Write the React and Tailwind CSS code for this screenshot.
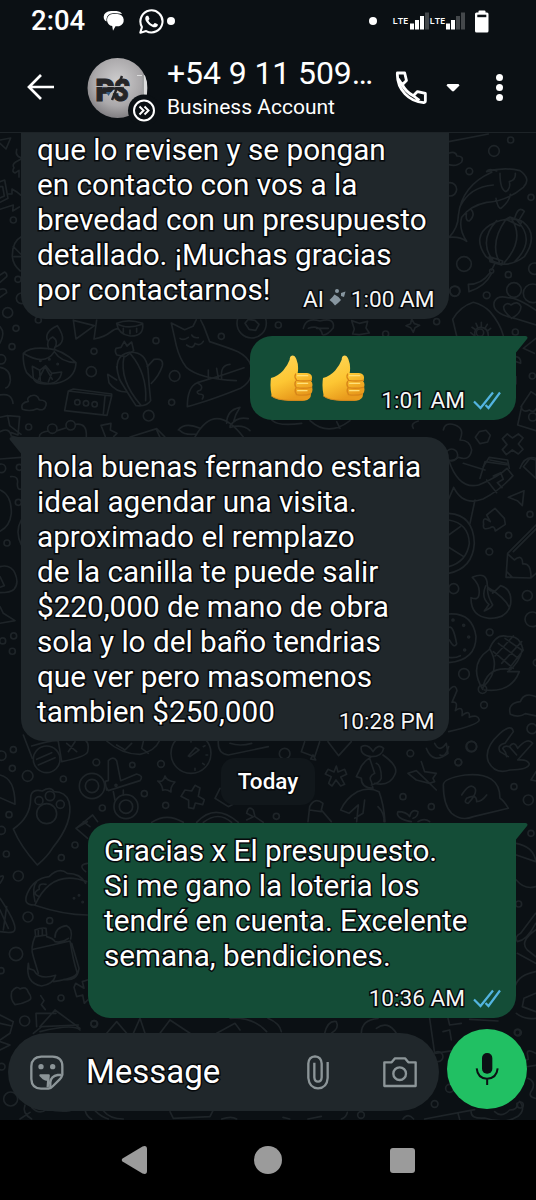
import React from 'react';

const OUTLINE = '[paint-order:stroke_fill] [-webkit-text-stroke:3px_#06090b]';

const Circles = ({ items }) => items.map(([x, y, r], i) => <circle key={i} cx={x} cy={y} r={r} />);

const Lines = ({ items }) => items.map((d, i) => <path key={i} d={d} />);

const Wallpaper = () => (
  <svg className="absolute inset-0" width="536" height="1200" viewBox="0 0 536 1200" fill="none" stroke="#1e2428" strokeLinecap="round" strokeLinejoin="round">
    {/* left edge, upper */}
    <g transform="translate(0 130) scale(.3333)" strokeWidth="5">
      <Circles items={[[40, 270, 9], [54, 448, 9], [65, 505, 16], [23, 548, 15], [48, 595, 9], [36, 650, 9], [3, 688, 14], [58, 1012, 9], [55, 1117, 9], [21, 1239, 9], [41, 1518, 9], [4, 1015, 13], [8, 1533, 9], [37, 1564, 9]]} />
      <Lines
        items={[
          'M0 30 L32 24 L18 57 L0 40', 'M50 58 q-5 20 12 25 M62 88 l-15 8 q-12 8 -5 17 q-8 12 3 16 l12 -8 v20',
          'M0 155 l14 -5 l10 55 l-24 12 M0 170 l8 0 l5 28 l-13 6', 'M24 192 h12 v-15 l16 10 l10 8 M0 238 l40 -13 l-2 18 l20 -12',
          'M64 320 q-28 14 -27 60 q2 25 24 43 M40 350 l22 22 M42 380 h20', 'M0 435 l14 -9 q9 5 6 14 l-20 17 M0 478 q20 -5 20 10 l-20 14', 'M0 590 q17 18 0 49',
          'M0 712 q32 5 31 40 q-3 20 -14 22', 'M0 795 q35 -7 39 25', 'M0 862 l23 -5 l6 30 l34 26 M23 857 l36 3 l-5 55 l-20 -7 M0 905 q28 -14 34 13 l28 8', 'M0 987 l63 -5',
          'M32 1040 q25 -3 20 22 q0 20 12 15', 'M0 1080 q35 15 34 70 q-4 38 -34 54', 'M64 1170 q-20 35 0 75',
          'M0 1310 q32 -8 45 20 q13 30 -3 48 q-10 10 -42 10 M0 1340 l13 27 l-13 5', 'M0 1430 l10 20 l35 22 l-45 8',
        ]}
      />
    </g>
    {/* oil lamp, box, cactus, fox */}
    <g transform="translate(0 300) scale(.3333)" strokeWidth="5">
      <Circles items={[[468, 122, 9], [282, 154, 9], [274, 215, 15], [524, 228, 16], [664, 109, 9], [515, 307, 9], [375, 348, 9], [446, 347, 16], [86, 381, 9], [232, 307, 8], [258, 310, 8], [284, 313, 8], [121, 182, 2], [148, 178, 2], [173, 192, 2], [157, 386, 14], [212, 376, 14], [115, 60, 9]]} />
      <Lines
        items={[
          'M70 160 q20 -20 76 -14 q40 3 82 42 q-2 50 -60 62 q-54 8 -88 -32 q-12 -25 -10 -58 M70 160 q65 40 93 -5 q20 32 65 33',
          'M146 146 q-10 -25 12 -35 q20 12 4 38 M142 120 q-9 -25 30 -43 q35 50 -8 65',
          'M100 235 l-3 -36 l22 12 l18 -14 l18 23 l30 -4 q-5 36 -50 36 q-30 0 -35 -17 M119 212 l2 30 M155 220 l-10 26 M115 240 l20 -40 l22 38',
          'M205 273 l130 15 l-14 58 l-127 -14 z M205 273 l15 -6 l115 15 v5 M315 289 l-5 53',
          'M92 288 q20 -8 26 12 q24 0 20 16 q-5 20 -27 10 q-20 10 -44 2 q-7 -20 18 -24 q-6 -10 7 -16',
          'M220 60 l8 57 l55 -40 l-60 -15 M290 60 l-8 57 q30 -5 50 -21 q12 -10 22 -10 M350 70 q35 -15 78 0 q5 40 -38 38 q-35 -5 -40 -38 q30 20 76 3 M370 85 v12 M390 90 v12 M410 85 v12',
          'M348 145 q-5 10 3 20 l25 5 l25 -18 l-6 -26 l-14 12 l-8 -14 l-10 18 z',
          'M408 317 q-20 -30 -50 -80 q-22 -70 30 -80 q50 -3 56 50 q3 50 8 95 q-10 18 -44 15 M372 170 q-15 70 50 145 M392 162 q50 60 45 140 M350 200 q5 40 22 60',
          'M350 240 l-27 -17 l4 25 q20 28 53 28 M442 200 l20 -22 q30 -5 25 20 q-10 30 -33 52',
          'M529 137 l-15 -68 l40 20 q20 -8 25 -10 l10 -20 M602 60 l10 20 l17 45 q60 20 85 30 q30 15 38 40 M529 137 q10 40 30 65 q40 35 150 40 M540 115 q10 8 25 -3 M575 105 q5 10 20 8 M560 135 q20 15 25 -5 q15 10 25 -6',
          'M562 320 q0 -60 30 -72 q70 -20 140 -45 M562 320 q60 -15 160 -55 q25 -15 30 -35 M592 248 q20 10 10 22 q-18 5 -5 12 q20 0 10 15 M625 235 v-25 M655 235 l-5 -30 M665 235 q-5 -40 25 -42',
          'M118 411 q0 -15 28 -18 M172 392 l25 -8 M227 373 q35 -5 32 38 M303 376 l30 -6 l-2 20 l20 10 l-10 10 M303 376 l13 34 M390 411 l80 -25 l25 25 M470 390 l10 22',
          'M585 411 q60 -110 145 0 M535 390 q20 -25 65 -5 M540 392 q15 15 50 10 M680 370 q0 -40 40 -48 q-15 22 -20 45 M690 378 q20 -30 55 -22 M690 382 q40 -10 60 10',
        ]}
      />
    </g>
    {/* between the first bubbles */}
    <g transform="translate(240 270) scale(.3333)" strokeWidth="5">
      <Circles items={[[35, 160, 44], [115, 165, 9], [590, 155, 9], [437, 192, 9], [645, 63, 15]]} />
      <Lines items={['M15 160 l10 -12 l20 3 l12 12 l-10 18 l-20 -3 z', 'M190 175 q8 -35 50 -22 q45 -12 40 20 q-15 20 -30 22 M205 175 q35 -12 42 18 M230 175 h35', 'M335 152 l23 8 l25 -6 l-5 20 l10 15 l-30 5 l-20 -2 l5 -15 z', 'M515 147 l8 14 l16 5 l-14 7 l-5 14 l-8 -14 l-14 -6 l14 -6 z', 'M95 450 q20 20 90 10 M210 452 q55 50 120 0 M520 475 q-10 -15 15 -22 M290 455 l10 20']} />
    </g>
    {/* fish, lantern, hand, shuttle */}
    <g transform="translate(440 130) scale(.3333)" strokeWidth="5">
      <Circles items={[[212, 30, 9], [162, 63, 16], [88, 124, 10], [273, 202, 9], [72, 402, 22], [205, 434, 9], [283, 416, 17], [44, 484, 15], [140, 496, 10], [222, 480, 22], [278, 490, 28], [226, 606, 9], [277, 738, 9], [120, 608, 11], [30, 178, 20], [278, 861, 12], [35, 975, 18], [155, 423, 6]]} />
      <Lines
        items={[
          'M26 35 L145 12', 'M26 70 q20 -8 25 8 q22 0 14 18 q-15 15 -39 8',
          'M140 125 q50 -15 100 -3 q35 25 10 50 q-50 42 -110 45 q-50 10 -75 45 q-10 35 15 72 q-20 -15 -53 -12 q28 -30 28 -65 q10 -90 100 -130 M140 125 q5 -12 30 -2 M180 130 q0 50 18 55 q15 -10 10 -30 q20 -5 18 -25 M168 205 q5 30 15 30 q25 -20 28 -42 M80 245 q-5 30 8 28 q20 -20 5 -35 M60 230 q30 -60 100 -65',
          'M150 285 q-55 35 -12 95 q55 45 115 0 q45 -65 -5 -105 q-45 -20 -98 10 M170 272 q-55 60 -12 118 M198 268 q-50 70 -20 128 M215 268 q40 60 -22 130 M230 270 q60 60 -5 124 M198 268 l42 20 l5 -15 l-35 -12 z M225 262 q10 -35 28 -18 l-15 25 M148 380 l40 13 l-3 12 l-35 -10 z',
          'M165 400 l-10 20 M155 430 q-20 40 -68 55 l-2 -22 q40 0 65 -35',
          'M50 618 L38 568 Q60 530 100 517 Q130 525 150 545 Q180 580 190 617 M92 608 l10 8 M96 592 l12 8 M108 580 l5 12 M124 577 v12 M142 583 l-6 10 M152 595 l-10 8 M105 617 q-5 -20 15 -25 q25 0 25 25',
          'M288 585 l-65 -20 q-70 -15 -60 -50 q10 -20 40 -12 q30 0 85 38 M215 565 q-25 -20 -24 -35 q8 -15 22 -5 q20 -15 30 5 q0 20 -28 35',
          'M288 625 l-38 30 l33 15 M228 680 q15 2 14 20 l-14 -5 M228 740 v22',
          'M288 795 l-15 -10 l-30 45 q5 20 25 10 q12 10 20 -3 M245 830 l-12 55 l55 17',
          'M118 905 l20 -4 l13 15 l-8 20 l-23 5 l-14 -19 z', 'M202 912 l15 12 l18 -12 l14 12 l-14 18 l14 16 l-14 14 l-18 -12 l-18 14 l-12 -15 l14 -15 l-14 -18 z',
          'M10 900 q5 -25 35 -15 q30 10 15 45 q30 0 35 30 q-5 35 -40 22 q-25 20 -50 0 M70 1000 l65 20 M130 1010 l18 -28 l55 8 l5 25 M150 990 l50 10 M240 1015 q15 -40 48 -30',
        ]}
      />
    </g>
    {/* magnet, pencil, flame, corn, hand, bubble */}
    <g transform="translate(440 460) scale(.3333)" strokeWidth="5">
      <Circles items={[[270, 163, 9], [206, 226, 9], [148, 275, 10], [41, 386, 15], [262, 407, 15], [277, 478, 22], [149, 517, 10], [72, 642, 16], [132, 735, 10], [276, 806, 15], [95, 859, 15], [55, 907, 10], [222, 980, 9], [265, 1020, 15], [39, 480, 3], [71, 496, 3], [86, 531, 3], [74, 570, 3], [290, 608, 10]]} />
      <Lines
        items={[
          'M26 0 q30 90 90 75 q60 -25 85 -50 l18 22 q-40 45 -90 70 q-60 22 -88 -35 l-15 35 M140 60 l30 38 M160 48 l22 -10 l8 20 l-18 10 l14 15 M120 55 l15 -50 l70 10 M105 120 l-15 70', 'M250 20 l20 -25 l18 5 v55 z', 'M205 112 l47 -20 l-5 45 l-15 -15 z',
          'M140 165 l25 -20 l28 30 l3 18 l-30 20 q-3 -18 -15 -10 q-25 10 -20 -10 q-5 -28 20 -8 z', 'M26 160 q75 5 77 90 q-5 75 -77 90 M26 180 q60 10 62 70 q-8 55 -62 70 M26 225 l35 -25 M26 262 l45 28',
          'M288 195 l-85 85 l-5 72 l75 2 l20 -18 M203 282 l20 18 q25 -20 25 12 q25 -5 25 40 M200 335 l15 15 M220 275 l70 -70',
          'M97 352 q45 -20 45 25 q5 20 20 15 q-15 20 20 -15 q35 10 30 55 q-10 45 -65 43 q-55 -5 -54 -62 q20 8 23 -5 q8 -30 -19 -56 M137 378 q-15 35 10 55 q-10 15 -14 20 q20 -8 25 -18 q-18 -30 -15 -53 q50 30 65 60',
          'M26 462 q72 -5 82 68 q0 70 -82 78 M28 502 q12 -5 22 50 q-8 15 -22 -12 M26 592 q20 3 35 -5',
          'M128 688 q-45 -75 20 -120 q20 -50 55 -38 q35 -5 45 35 q-10 45 -45 70 h35 q-25 65 -105 55 M150 568 q35 60 -22 115 M128 688 q10 -70 85 -60 M160 575 l60 50 M175 550 l60 45 M195 535 l50 35 M220 528 l-55 60 M245 545 l-60 65 M250 570 l-42 55',
          'M115 688 a12 12 0 1 0 25 0 a12 12 0 1 0 -25 0', 'M26 692 q20 -25 25 0 l-15 35 q20 -5 10 25 q25 -18 20 15 q25 -20 22 5 q25 -10 30 8 q-5 15 -92 35',
          'M288 710 q-35 -15 -47 15 q-40 5 -30 38 q25 12 45 -2 l32 7', 'M220 815 q-5 -25 -40 5 q-50 45 -35 85 q20 40 65 25 q55 0 58 -18 q-5 -15 -35 -12 l45 -50 q-15 -20 -45 15 q-10 -25 -25 -5 q-15 -5 -20 5 q10 10 12 25 M220 815 l-25 35 q-25 5 -15 25 l25 15 M208 860 l22 25',
          'M26 860 q-10 35 -26 25', 'M75 945 q-65 10 -65 30 q0 60 25 85 q30 25 65 10 l105 -25 q-15 -25 -25 -30 q0 -80 -105 -70 M65 1005 q25 -40 40 -20 q8 15 -20 45 q-15 0 -5 -15 q30 -15 30 10 q15 0 30 -20 M288 935 l-15 25 l15 3',
        ]}
      />
    </g>
    {/* paw, scissors, taco, jar */}
    <g transform="translate(0 730) scale(.3333)" strokeWidth="5">
      <Circles items={[[40, 59, 9], [4, 77, 14], [37, 115, 9], [83, 138, 16], [190, 147, 9], [289, 97, 10], [397, 105, 8], [483, 102, 10], [433, 191, 9], [307, 234, 9], [497, 226, 9], [27, 254, 9], [4, 301, 12], [225, 345, 9], [19, 372, 9], [184, 383, 9], [55, 438, 15], [84, 561, 15], [149, 572, 9], [48, 672, 20], [183, 804, 9], [74, 873, 15], [282, 881, 9], [140, 88, 40], [573, 70, 60], [276, 168, 38], [276, 168, 20], [378, 230, 36], [378, 230, 20], [117, 212, 12], [150, 198, 14], [181, 223, 12], [140, 251, 30], [222, 505, 2], [237, 496, 2], [248, 516, 2], [3, 722, 9], [348, 166, 3]]} />
      <Lines
        items={[
          'M70 15 l27 70 M95 48 q70 -20 80 -15 M175 35 l10 60 q75 -15 78 -30 q5 -25 -5 -32 M110 88 l45 -20 M115 105 l50 -22 M200 40 l30 25 M225 35 l-20 30', 'M320 33 q45 40 100 40 q45 -10 58 -40 M350 45 l25 15 l20 -20 M430 35 l-5 20 l20 15', 'M565 78 l22 -25 l10 7 l-27 20 z M573 28 v8 M610 50 l5 -3 M618 75 h5 M608 100 l5 4 M585 115 v6', 'M655 33 q-3 38 30 42 l120 -25 M690 40 q30 10 65 0',
          'M325 92 q15 -15 25 0 l12 60 l48 -20 q22 5 10 20 l-95 30 q-20 -30 0 -30 z M315 155 l5 25 M340 185 l5 25 M370 180 v15',
          'M495 138 q5 15 30 18 q-15 15 -12 30 q-15 -10 -25 -5 q0 -15 -15 -28 q18 5 22 -15', 'M555 180 l20 3 l10 -17 l15 8 l-5 25 l18 10 l-5 15 l-22 -5 l-5 17 l-15 -3 v-22 l-23 -12 z', 'M660 175 l-15 30 l40 25 l20 -10',
          'M92 205 q0 -30 35 -22 q25 -15 35 2 q35 0 45 30 q15 60 -50 140 q-15 25 -45 50 q-50 -55 -72 -108 q52 -35 52 -92', 'M0 135 q45 10 45 88 l-45 -20',
          'M262 275 l-34 20 l35 30 M228 295 l50 -40 l15 20 M250 275 l20 15', 'M455 277 q45 -30 95 0 M590 277 q55 -60 125 0 M610 277 q45 -35 85 0 M740 270 l20 -10 l-20 -10 q5 -25 20 -10 l5 20 l25 17',
          'M262 555 q-70 0 -160 -30 q-35 0 -20 -35 q20 -45 65 -50 q30 -30 55 -10 q40 0 55 30 M105 525 q50 -110 155 -70 M118 500 q-25 -10 0 -22 q-5 -20 20 -15 M110 455 q-15 15 -5 60', 'M0 440 q20 -10 0 20 M0 505 q60 90 40 100 q-10 5 -40 0 M0 540 l25 55 M20 530 l-10 70', 'M262 400 q-30 5 -5 25',
          'M105 600 q20 -8 33 -5 l2 20 l-33 5 z M115 600 v18 M127 597 v18 M105 620 q-15 35 -5 60 l15 50 M100 658 l110 -25 q10 60 20 90 q10 20 -70 32 M165 622 q0 -30 35 -35 q20 10 12 40 M140 620 q20 5 25 15 q20 5 40 -10 M85 700 q-10 60 40 68 q35 -5 42 -32 q-50 15 -65 -15 l-15 -5 z M215 640 l22 75 q-5 40 -45 33',
          'M35 785 q15 -20 25 -8 q20 -10 25 10 q15 20 0 25 q-20 10 -40 12 q-15 -15 -10 -39 M122 797 l10 15 l-8 12 l12 15', 'M262 750 l-15 5 l5 20 l-25 -15 l-5 12 l8 28 l18 -5 l5 25 l10 -10',
          'M0 855 l40 20 l-10 35 l-30 20 M0 880 l35 8 M108 850 l2 40 M108 850 l60 0 M165 840 l75 55 M165 840 l-45 50 M120 905 q100 -25 120 -5 M320 910 l30 -35 l30 35 M400 910 l20 -45 l15 45 M480 910 l30 -40 l60 40 M650 910 l55 -30 l15 20 M690 865 q70 -5 110 40',
        ]}
      />
    </g>
    {/* girl with bow, pin, flower */}
    <g transform="translate(268 730) scale(.3333)" strokeWidth="5">
      <Circles items={[[50, 71, 16], [25, 259, 9], [427, 70, 10], [571, 97, 10], [610, 50, 16], [405, 200, 9], [490, 230, 9], [789, 310, 9], [752, 522, 9], [748, 907, 9]]} />
      <Lines
        items={[
          'M110 35 l-10 30 l40 15 l15 -45 M135 75 l8 15 l-15 -3 z', 'M180 35 l32 42 l38 -42', 'M205 108 l5 18 l20 -8 l6 15 l-18 8 l12 22 l-12 5 l-14 -18 l-12 18 l-10 -8 l8 -20 l-18 -8 l8 -14 l18 8 z',
          'M310 80 q-35 -5 -30 -30 q20 -10 35 15 q15 -25 32 -10 q-5 25 -37 25 q-30 20 -35 40 l-10 20 l15 5 q0 30 35 30 l-5 -20 q-10 -15 10 -25 l-15 -45 M345 75 q50 35 35 60 q-15 35 -60 25 M325 100 q15 5 15 45 q-5 15 -30 20', 'M268 185 q35 -15 65 0 q15 40 18 90 M268 185 q-35 20 -50 55 l25 10 l28 -25 l-5 50 M290 210 l-5 40 l-25 15 M330 230 q20 20 18 45 M120 275 l5 -45 q15 -30 40 -10 l-5 20 l30 35 M125 240 l35 5',
          'M475 55 q20 50 65 15 l-5 -30 q-20 30 -35 0', 'M460 95 l10 30 l35 5 l-10 15 l5 10 l-15 5 l20 20 M485 160 l-40 -10 l-25 -20 l25 -8 z', 'M430 275 q-50 -10 -40 -30 q25 0 35 15 q5 -25 25 -15 q0 15 -15 20 M450 275 q20 -12 35 0',
          'M745 340 q50 10 58 50 M745 375 l58 20 M745 450 q25 30 58 20 M803 550 l-45 60 q-20 10 -10 25 q30 -5 55 -55 M803 600 q-50 35 -25 60 l25 20 M748 670 l55 30', 'M803 725 q-50 10 -60 40 M803 790 l-35 15 l-5 25 l40 15 M745 850 q25 20 58 15',
          'M485 865 l15 105 l80 -12 M540 865 l5 20 l35 -5 M605 868 l85 5 M525 905 l20 -5 l5 30 M170 910 q10 -40 35 -35 q10 20 -15 35 M280 910 q0 -40 50 -45 M325 895 q35 -25 60 15 M0 865 q35 15 40 40',
        ]}
      />
    </g>
    {/* below the input */}
    <g transform="translate(0 1020) scale(.3333)" strokeWidth="5">
      <Circles items={[[32, 237, 21], [5, 140, 10], [283, 12, 10]]} />
      <Lines items={['M75 255 q-10 25 20 42 M95 262 q25 25 45 5 q40 10 70 5 M60 297 l30 -20 M255 270 q5 20 20 28 M285 272 q20 20 40 25 M310 272 q20 25 60 25 M510 275 l10 20 l110 -5 l10 -20 M665 297 q30 -10 45 0', 'M0 65 l30 10 l-30 15 M100 40 l25 -20 l110 -5']} />
    </g>
    <g transform="translate(268 1020) scale(.3333)" strokeWidth="5">
      <Circles items={[[750, 38, 10], [510, 110, 15], [500, 252, 10], [279, 285, 10], [757, 255, 9], [545, 205, 12]]} />
      <Lines items={['M470 297 l150 -28 M570 280 l5 18 M610 272 q-5 25 40 22 q60 20 100 -5 q25 -20 5 -45 M680 275 q20 20 45 -5 q25 0 22 -20', 'M803 100 q-25 -15 -25 0 l3 18 l-15 5 l5 18 l32 -5 M780 175 q25 10 12 35 q-15 20 10 25', 'M220 297 q15 -5 18 -20 M45 292 l20 5 M120 297 l40 -8 M405 297 q15 -20 32 0']} />
    </g>
  </svg>
);

const Signal = ({ level }) => (
  <svg width="19" height="18" viewBox="0 0 19 18" fill="#fff">
    <rect x="0" y="11.5" width="4" height="6" />
    <rect x="5" y="8" width="4" height="9.5" />
    <rect x="10" y="4" width="4" height="13.5" fill={level > 2 ? '#fff' : '#44484b'} />
    <rect x="15" y="0.5" width="4" height="17" fill="#44484b" />
  </svg>
);

const StatusBar = () => (
  <div className="flex h-[42px] items-center pl-[31px] text-white">
    <span className="w-[54px] text-[27.5px] font-medium leading-[42px]">2:04</span>
    <svg className="ml-[18px]" width="22" height="22" viewBox="0 0 22 22" fill="#fff">
      <path d="M8 1 h5.500 q4.500 .5 5.500 3 q-3 -1 -9 -.8 q-6 .5 -6.500 5.800 v2.500 q-3 -1.500 -2.800 -5 q.5 -5 7.300 -5.500z" />
      <path d="M9.500 3.900 h5 a6.300 6.300 0 0 1 1.500 12.400 h-3.500 l-2.500 4.500 l-.8 -4.800 a6.100 6.100 0 0 1 .3 -12.100z" />
    </svg>
    <svg className="ml-[13.500px]" width="25" height="25" viewBox="0 0 24 24" fill="#fff">
      <path d="M17.472 14.382c-.297-.149-1.758-.867-2.030-.967-.273-.099-.471-.148-.670.150-.197.297-.767.966-.940 1.164-.173.199-.347.223-.644.075-.297-.150-1.255-.463-2.390-1.475-.883-.788-1.480-1.761-1.653-2.059-.173-.297-.018-.458.130-.606.134-.133.298-.347.446-.520.149-.174.198-.298.298-.497.099-.198.050-.371-.025-.520-.075-.149-.669-1.612-.916-2.207-.242-.579-.487-.500-.669-.510-.173-.008-.371-.010-.570-.010-.198 0-.520.074-.792.372-.272.297-1.040 1.016-1.040 2.479 0 1.462 1.065 2.875 1.213 3.074.149.198 2.096 3.200 5.077 4.487.709.306 1.262.489 1.694.625.712.227 1.360.195 1.871.118.571-.085 1.758-.719 2.006-1.413.248-.694.248-1.289.173-1.413-.074-.124-.272-.198-.570-.347" />
      <path d="M1.300 22.700 l1.500 -5.500 a10.600 10.600 0 1 1 4.100 4z" fill="none" stroke="#fff" strokeWidth="2" strokeLinejoin="round" />
    </svg>
    <span className="ml-[3px] h-2 w-2 rounded-full bg-white" />
    <span className="ml-[194.500px] h-2 w-2 rounded-full bg-white" />
    <span className="ml-[15.500px] w-[17px] font-['Open_Sans'] text-[9.500px] font-semibold leading-none">LTE</span>
    <Signal level={3} />
    <span className="ml-px w-[16px] font-['Open_Sans'] text-[9.500px] font-semibold leading-none">LTE</span>
    <Signal level={2} />
    <svg className="ml-[10px]" width="14" height="23" viewBox="0 0 14 23">
      <rect x="3.500" y="0.500" width="7" height="4" rx="1" fill="#fff" />
      <rect x="0" y="2.500" width="13.500" height="20" rx="1.500" fill="#fff" />
      <rect x="2.300" y="4.700" width="9" height="2.500" fill="#0b1014" />
    </svg>
  </div>
);

const Avatar = () => (
  <svg className="ml-[32.500px] shrink-0" width="70" height="66" viewBox="87 58 70 66">
    <defs>
      <radialGradient id="avatar" cx=".5" cy=".4" r=".65">
        <stop offset="0" stopColor="#cfcecf" />
        <stop offset=".6" stopColor="#aaa8aa" />
        <stop offset="1" stopColor="#737175" />
      </radialGradient>
      <clipPath id="face"><circle cx="117.500" cy="88" r="30" /></clipPath>
    </defs>
    <g clipPath="url(#face)">
      <rect x="87" y="57" width="61" height="62" fill="url(#avatar)" />
      <path d="M137 75 h10 v25 h-5 v-24 h-5z" fill="#dcdddd" />
      <path d="M143 75 v20" stroke="#656668" />
      <text x="95.500" y="100.500" fill="#252527" stroke="#252527" strokeWidth="1.200" className="font-['Roboto'] text-[31px] font-black" textLength="19" lengthAdjust="spacingAndGlyphs">P</text>
      <text x="113" y="100.500" fill="#252527" stroke="#252527" strokeWidth="1" className="font-['Roboto'] text-[31px] font-black italic" textLength="16" lengthAdjust="spacingAndGlyphs">S</text>
      <path d="M112 100 l10 -24" stroke="#252527" strokeWidth="2.500" />
      <path d="M95 86.500 h34" stroke="#b5b4b5" strokeWidth="1" />
      <path d="M103 88.500 h21" stroke="#252527" strokeWidth="2.500" />
      <path d="M106 92 h5 l-2.500 4z" fill="#355c84" />
    </g>
    <circle cx="144" cy="110.500" r="16" fill="#0b1014" />
    <circle cx="144" cy="110.500" r="10" fill="none" stroke="#fff" strokeWidth="2" />
    <path d="M139.500 106.500 l4 4 l-4 4 M144.500 106.500 l4 4 l-4 4" fill="none" stroke="#fff" strokeWidth="2" />
  </svg>
);

const Header = () => (
  <div className="flex h-[91px] items-start border-b border-[#1d2327] pl-[26px] text-white">
    <svg className="mt-[31px] shrink-0" width="28" height="28" viewBox="0 0 28 28" fill="none" stroke="#fff" strokeWidth="2.700">
      <path d="M28 14 H3 M15 2 L3 14 L15 26" />
    </svg>
    <div className="mt-4"><Avatar /></div>
    <div className="ml-[10.500px] w-[214px]">
      <div className="mt-[12px] text-[32px] leading-[38px] tracking-[-0.1px]">+54 9 11 509…</div>
      <div className="mt-[2px] text-[21px] leading-[26px]">Business Account</div>
    </div>
    <svg className="ml-[9px] mt-[24px]" width="42" height="42" viewBox="0 0 24 24" fill="none" stroke="#fff" strokeWidth="1.600" strokeLinejoin="round">
      <path d="M4.200 4 h4.200 l1 4.300 -2.400 2.400 a15 15 0 0 0 6.300 6.300 l2.400 -2.400 4.500 1.100 v4.200 a1 1 0 0 1 -1 1 A16 16 0 0 1 4.200 5z M7 10.700 L4.700 7.300 M13.300 17 l3.500 2.700" />
    </svg>
    <svg className="ml-[14px] mt-[41px]" width="14" height="9" viewBox="0 0 14 9">
      <path d="M1.500 1 h11 l1 1.500 l-5.500 5.500 q-1 .8 -2 0 l-5.500 -5.500z" fill="#fff" />
    </svg>
    <div className="ml-[35.500px] mt-[32px] flex flex-col gap-[3px]">
      <span className="h-[7px] w-[7px] rounded-full bg-white" />
      <span className="h-[7px] w-[7px] rounded-full bg-white" />
      <span className="h-[7px] w-[7px] rounded-full bg-white" />
    </div>
  </div>
);

const Ticks = () => (
  <svg width="28" height="20" viewBox="0 0 28 20" fill="none" stroke="#53b4e0" strokeWidth="2.200">
    <path d="M1 10.500 L7.500 17 L20 1.500 M12.500 14 L15.500 17 L27 1.500" />
  </svg>
);

const Sparkle = () => (
  <svg className="mx-[5px] mb-1.5" width="17" height="17" viewBox="0 0 17 17" fill="#8796a0">
    <path d="M5.500 5.500 L9.500 8 L12 11 L9 14 L6 16.500 L3.500 13.500 L0.500 11 L3.500 8z" strokeLinejoin="round" />
    <circle cx="8" cy="2" r="2" />
    <path d="M12 4 l4.500 -1.500 l-1.500 5.500 l-3 -1z" />
  </svg>
);

const Thumb = () => (
  <svg width="43" height="46" viewBox="89 254 129 138">
    <defs>
      <linearGradient id="skin" x1="0" y1="0" x2=".4" y2="1">
        <stop offset="0" stopColor="#ffd85c" />
        <stop offset=".6" stopColor="#fdc633" />
        <stop offset="1" stopColor="#e99b1c" />
      </linearGradient>
    </defs>
    <path d="M154 256 q9 -2 14 10 q8 20 4 42 h28 q16 2 15 15 q0 7 -3 9 q7 8 3 19 q4 10 -3 19 q1 18 -20 21 h-45 q-40 -2 -53 -14 q-6 -28 -2 -54 q20 -5 36 -22 q14 -16 20 -33 q0 -11 6 -12" fill="url(#skin)" />
    <path d="M166 311 q-5 8 2 17 M166 333 q-5 8 1 18 M166 355 q-4 8 2 16 M168 330 q22 4 45 0 M168 352 q22 4 46 -1 M168 373 q22 4 42 -2" fill="none" stroke="#d88618" strokeWidth="4" strokeLinecap="round" />
    <path d="M172 316 h30 M172 339 h30 M172 361 h28" stroke="#ffe07a" strokeWidth="4" strokeLinecap="round" />
    <path d="M92 376 q15 13 55 14 h42" fill="none" stroke="#d98a1c" strokeWidth="3" />
  </svg>
);

const Meta = ({ time, ai, read, className }) => (
  <div className={`flex items-center self-end text-[22.600px] leading-[26px] text-[#f5f6f6] ${OUTLINE} ${className}`}>
    {ai && <><span>AI</span><Sparkle /></>}
    <span>{time}</span>
    {read && <span className="ml-2"><Ticks /></span>}
  </div>
);

const Bubble = ({ mine, tail = true, className, children }) => (
  <div className={`relative flex flex-col ${mine ? 'mr-5 self-end bg-[#144d37] text-white' : 'ml-[21px] w-[427.500px] self-start bg-[#20272b] text-white'} ${className}`}>
    {tail && mine && (
      <svg className="absolute -right-3 top-0" width="12" height="17" viewBox="0 0 12 17" fill="#144d37">
        <path d="M0 0 H9.500 Q12.500 .5 11 3 L0 16.500z" />
      </svg>
    )}
    {tail && !mine && (
      <svg className="absolute -left-3 top-0" width="12" height="17" viewBox="0 0 12 17" fill="#20272b">
        <path d="M12 0 H2.500 Q-.5 .5 1 3 L12 16.500z" />
      </svg>
    )}
    {children}
  </div>
);

const Message = ({ text }) => (
  <p className={`whitespace-pre text-[29.700px] leading-[35px] ${OUTLINE}`}>{text}</p>
);

const REVIEW = `que lo revisen y se pongan
en contacto con vos a la
brevedad con un presupuesto
detallado. ¡Muchas gracias
por contactarnos!`;

const QUOTE = `hola buenas fernando estaria
ideal agendar una visita.
aproximado el remplazo
de la canilla te puede salir
$220,000 de mano de obra
sola y lo del baño tendrias
que ver pero masomenos
tambien $250,000`;

const REPLY = `Gracias x El presupuesto.
Si me gano la loteria los
tendré en cuenta. Excelente
semana, bendiciones.`;

const Chat = () => (
  <div className="flex h-[896px] flex-col overflow-hidden">
    <Bubble tail={false} className="h-[186px] shrink-0 rounded-b-[24px] pl-4 pr-[14px]">
      <div className="-mt-px"><Message text={REVIEW} /></div>
      <Meta time="1:00 AM" ai className="-mt-[20px]" />
    </Bubble>
    <Bubble mine className="mt-[17px] h-[84px] w-[266px] shrink-0 rounded-[22px] rounded-tr-none pl-5 pr-[15px] pt-[19px]">
      <div className="flex gap-[9px]"><Thumb /><Thumb /></div>
      <Meta time="1:01 AM" read className="-mt-[13px]" />
    </Bubble>
    <Bubble className="mt-[17px] h-[304px] shrink-0 rounded-[22px] rounded-tl-none pl-4 pr-[14px] pt-[12px]">
      <Message text={QUOTE} />
      <Meta time="10:28 PM" className="-mt-[20px]" />
    </Bubble>
    <div className={`mt-[17px] h-[47px] w-[94px] shrink-0 self-center rounded-[14px] bg-[#11171b] text-center text-[22.500px] font-medium leading-[47px] text-white ${OUTLINE}`}>
      Today
    </div>
    <Bubble mine className="mt-[18px] h-[195px] w-[428px] shrink-0 rounded-[22px] rounded-tr-none pl-4 pr-[15px] pt-[10px]">
      <Message text={REPLY} />
      <Meta time="10:36 AM" read className="mt-[13px]" />
    </Bubble>
  </div>
);

const InputBar = () => (
  <div className="flex h-[91px] items-start pl-2">
    <div className="mt-1 flex h-[78px] w-[431px] items-center rounded-full bg-[#20272b] pl-[22px]">
      <svg width="34" height="35" viewBox="90 104 102 105" fill="none" stroke="#8c9598" strokeWidth="7" strokeLinejoin="round">
        <path d="M124 109 h34 q29 1 29 29 v25 q-2 8 -8 14 l-20 20 q-6 7 -14 8 h-22 q-28 -1 -29 -29 v-38 q1 -28 30 -29z" />
        <path d="M119 165 h27 q-2 22 -3 36 M183 164 h-10 q-20 3 -22 22 v14" />
        <circle cx="123" cy="139" r="8" fill="#8c9598" stroke="none" />
        <circle cx="158" cy="139" r="8" fill="#8c9598" stroke="none" />
        <path d="M118 164 q7 17 26 18 v-18z" fill="#8c9598" stroke="none" />
      </svg>
      <span className={`ml-[22px] w-[138px] text-[33px] leading-[40px] text-white ${OUTLINE}`}>Message</span>
      <svg className="ml-[82px]" width="24" height="36" viewBox="117 102 72 108" fill="none" stroke="#8c9598" strokeWidth="7">
        <path d="M182 126 v48 q-2 30 -29 31 q-26 -1 -29 -31 v-43 q1 -21 20 -22 q19 1 20 22 v41 q-1 13 -11 13 q-10 0 -11 -13 v-44" />
      </svg>
      <svg className="ml-[52px]" width="36" height="32" viewBox="342 108 108 96" fill="none" stroke="#8c9598" strokeWidth="7" strokeLinejoin="round">
        <path d="M349 127 h22 l10 -12 h30 l10 12 h22 v71 h-94z" />
        <circle cx="395" cy="161" r="19" />
      </svg>
    </div>
    <div className="ml-2 flex h-[80px] w-[80px] items-center justify-center rounded-full bg-[#21c063]">
      <svg width="24" height="34" viewBox="620 98 72 102" fill="none" stroke="#0b1014" strokeWidth="6">
        <rect x="641" y="101" width="31" height="62" rx="15" fill="#0b1014" stroke="none" />
        <path d="M625 147 q3 30 31 31 q29 -1 32 -31 M656.500 178 v19" />
      </svg>
    </div>
  </div>
);

const NavBar = () => (
  <div className="flex h-20 items-center bg-black pl-[121px]">
    <svg width="27" height="28" viewBox="0 0 27 28" fill="#9b9b9b">
      <path d="M1.500 12.500 L21.500 .5 Q26 -1 26 3 V25 Q26 29 21.500 27.500 L1.500 15.500 Q0 14 1.500 12.500z" />
    </svg>
    <span className="ml-[106px] h-[28px] w-[28px] rounded-full bg-[#9b9b9b]" />
    <span className="ml-[108px] h-[25px] w-[25px] rounded-[3px] bg-[#9b9b9b]" />
  </div>
);

const App = () => {
  return (
    <div className="relative h-[1200px] w-[536px] overflow-hidden bg-[#0b1014] font-['Roboto','Noto_Sans',sans-serif]">
      <Wallpaper />
      <div className="relative flex flex-col">
        <div className="bg-[#0b1014]">
          <StatusBar />
          <Header />
        </div>
        <Chat />
        <InputBar />
        <NavBar />
      </div>
    </div>
  );
};

export default App;
